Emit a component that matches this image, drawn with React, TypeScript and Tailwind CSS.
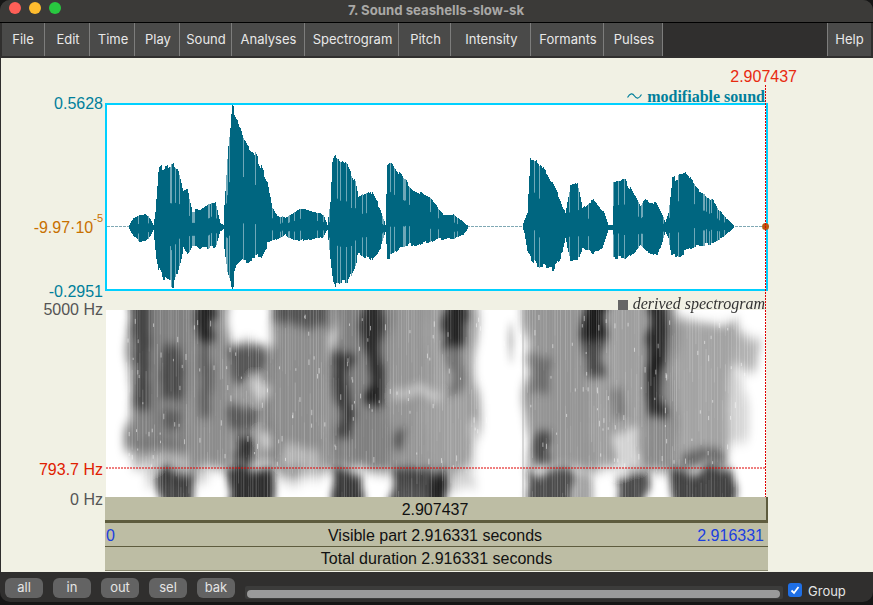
import { useMemo } from 'react';

const sans = { fontFamily: '"Liberation Sans", Arial, sans-serif' };

const menus = [
  { label: 'File', w: 'w-[43px]' },
  { label: 'Edit', w: 'w-[45px] pl-[2px]' },
  { label: 'Time', w: 'w-[45px] pl-[2px]' },
  { label: 'Play', w: 'w-[45px] pl-[2px]' },
  { label: 'Sound', w: 'w-[52px] pl-[1px]' },
  { label: 'Analyses', w: 'w-[73px] pl-[1px]' },
  { label: 'Spectrogram', w: 'w-[94px] pl-[2px]' },
  { label: 'Pitch', w: 'w-[52px] pl-[2px]' },
  { label: 'Intensity', w: 'w-[80px] pl-[2px]' },
  { label: 'Formants', w: 'w-[73px] pl-[2px]' },
  { label: 'Pulses', w: 'w-[59px] pl-[2px]' },
];

// outline of the wave: x, top, bottom in page pixels
const envelope: number[][] = [
  [106, 226.5, 227.5], [128, 226.5, 227.5], [133, 217, 237], [140, 213, 243], [148, 215, 240], [153, 225, 230],
  [155, 210, 253], [158, 165, 270], [163, 162, 282], [173, 157, 290], [178, 165, 273], [183, 190, 250],
  [187, 188, 258], [192, 210, 247], [200, 207, 250], [215, 200, 248], [220, 223, 232], [223, 225, 229],
  [224, 205, 250], [227, 152, 273], [232, 104, 290], [237, 115, 273], [243, 135, 265], [253, 147, 263],
  [260, 163, 260], [267, 178, 247], [272, 207, 243], [277, 215, 240], [285, 217, 235], [287, 215, 238],
  [300, 208, 242], [323, 213, 238], [327, 225, 230], [330, 200, 263], [332, 157, 283], [335, 152, 290],
  [347, 160, 288], [355, 178, 267], [358, 195, 257], [370, 188, 263], [380, 207, 250], [385, 225, 232],
  [387, 163, 260], [391, 160, 260], [400, 172, 250], [413, 188, 247], [430, 197, 243], [440, 210, 240],
  [443, 215, 240], [453, 213, 240], [463, 222, 235], [468, 226, 228], [470, 226.5, 227.5], [522, 226.5, 227.5],
  [524, 220, 233], [527, 212, 253], [530, 157, 260], [537, 155, 270], [553, 180, 272], [562, 203, 255],
  [565, 212, 240], [570, 185, 263], [577, 180, 265], [582, 207, 250], [593, 198, 255], [603, 210, 247],
  [608, 225, 230], [612, 225, 230], [613, 182, 260], [625, 178, 263], [640, 205, 247], [645, 197, 253],
  [657, 203, 258], [665, 222, 233], [668, 213, 240], [672, 177, 260], [685, 170, 255], [697, 187, 247],
  [713, 200, 245], [723, 215, 238], [733, 225, 228], [735, 226.5, 227.5], [766, 226.5, 227.5],
];

function lookup(x: number) {
  for (let i = 0; i < envelope.length - 1; i++) {
    const a = envelope[i];
    const b = envelope[i + 1];
    if (x >= a[0] && x <= b[0]) {
      const t = (x - a[0]) / (b[0] - a[0] || 1);
      return [a[1] + (b[1] - a[1]) * t, a[2] + (b[2] - a[2]) * t];
    }
  }
  return [226.5, 227.5];
}

function seeded(seed: number) {
  let s = seed;
  return () => {
    s = (s * 16807) % 2147483647;
    return s / 2147483647;
  };
}

function Waveform() {
  const bars = useMemo(() => {
    const rnd = seeded(41);
    const out: { x: number; t: number; b: number; light: boolean }[] = [];
    let jt = 0;
    let jb = 0;
    for (let x = 107; x < 766; x++) {
      const [t, b] = lookup(x);
      const size = b - t;
      if (size <= 2) continue;
      if (x % 3 === 0) {
        jt = rnd();
        jb = rnd();
      }
      const jitter = size * 0.07;
      const isPeak = x >= 231 && x <= 233;
      out.push({
        x,
        t: Math.round(isPeak ? t : t + jt * jitter),
        b: Math.round(isPeak ? b : b - jb * jitter),
        light: size > 20 && rnd() < 0.12,
      });
    }
    return out;
  }, []);

  return (
    <svg width="659" height="184" viewBox="107 105 659 184" className="block">
      <path d="M107 226.5H766" stroke="#7fa8b4" strokeWidth="1" strokeDasharray="3 1" />
      {bars.map((b) => (
        <g key={b.x}>
          <path d={`M${b.x + 0.5} ${b.t}V${b.b}`} stroke="#006680" strokeWidth="1" />
          {b.light && (
            <path d={`M${b.x + 0.5} ${b.t}V${b.t + (b.b - b.t) * 0.32}M${b.x + 0.5} ${b.b - (b.b - b.t) * 0.3}V${b.b}`} stroke="#6fa8b8" strokeWidth="1" />
          )}
        </g>
      ))}
    </svg>
  );
}

// broad gray of the voiced stretches: x, y, w, h, darkness
const washes: number[][] = [
  [127, 280, 60, 170, 0.5], [134, 445, 50, 26, 0.32], [146, 468, 60, 18, 0.18],
  [187, 280, 42, 190, 0.45], [229, 345, 44, 120, 0.4], [270, 280, 62, 195, 0.45],
  [272, 472, 50, 12, 0.16], [333, 280, 55, 192, 0.5], [388, 280, 40, 190, 0.42], [428, 280, 48, 192, 0.38],
  [394, 470, 80, 20, 0.18], [526, 280, 64, 192, 0.42], [590, 280, 55, 192, 0.38], [645, 280, 30, 192, 0.46],
  [675, 322, 58, 150, 0.36], [733, 338, 24, 26, 0.3], [733, 370, 14, 70, 0.16],
];

const marks: number[][] = [
  [133, 280, 17, 130, 0.46], [165, 345, 14, 55, 0.42], [164, 414, 16, 16, 0.3],
  [197, 280, 20, 62, 0.74], [199, 342, 14, 76, 0.32], [231, 348, 32, 34, 0.44], [231, 406, 28, 24, 0.42],
  [233, 436, 18, 30, 0.7], [272, 280, 56, 46, 0.4], [335, 352, 16, 86, 0.55], [365, 280, 18, 62, 0.66],
  [366, 342, 18, 66, 0.66], [364, 386, 10, 18, 0.46], [393, 430, 14, 20, 0.4],
  [446, 280, 20, 66, 0.78], [448, 346, 14, 50, 0.28], [527, 357, 24, 36, 0.28], [535, 432, 17, 28, 0.52],
  [584, 280, 20, 58, 0.84], [586, 338, 18, 38, 0.55], [611, 392, 13, 26, 0.24],
  [647, 280, 18, 138, 0.7], [651, 352, 9, 24, 0.35], [680, 449, 46, 15, 0.38],
  [160, 470, 34, 60, 0.72], [228, 468, 46, 62, 0.82], [332, 472, 32, 58, 0.78], [389, 468, 56, 62, 0.68],
  [527, 470, 44, 60, 0.7], [573, 473, 20, 57, 0.36], [615, 473, 31, 57, 0.7], [673, 470, 62, 60, 0.74],
  [431, 471, 14, 59, 0.55], [509, 322, 2, 36, 0.4],
];

// paler patches inside the gray
const gaps: number[][] = [
  [256, 382, 12, 16, 0.5], [258, 432, 12, 18, 0.5], [395, 386, 45, 11, 0.45], [616, 432, 24, 38, 0.55],
  [692, 290, 42, 30, 0.6], [140, 460, 18, 10, 0.4], [280, 448, 45, 18, 0.35], [470, 420, 12, 50, 0.4],
];

function Spectrogram() {
  const streaks = useMemo(() => {
    const rnd = seeded(977);
    const out: { x: number; y: number; h: number; o: number }[] = [];
    for (let x = 126; x < 760; x += 2 + rnd() * 1.4) {
      let y = 310;
      while (y < 497) {
        const h = 18 + rnd() * 70;
        out.push({ x, y, h, o: 0.03 + rnd() * 0.22 });
        y += h;
      }
    }
    return out;
  }, []);
  const specks = useMemo(() => {
    const rnd = seeded(313);
    return Array.from({ length: 200 }, () => ({
      x: 126 + rnd() * 630,
      y: 312 + rnd() * 155,
      h: 2 + rnd() * 4,
    }));
  }, []);

  // drawn 30px taller at both ends so the blur does not fade at the panel's edge
  return (
    <svg width="660" height="247" viewBox="106 280 660 247" className="mt-[-30px] block bg-white">
      <defs>
        <filter id="wash" x="-10%" y="-10%" width="120%" height="120%">
          <feTurbulence type="fractalNoise" baseFrequency="0.035 0.02" numOctaves="2" seed="7" result="noise" />
          <feDisplacementMap in="SourceGraphic" in2="noise" scale="22" xChannelSelector="R" yChannelSelector="G" />
          <feGaussianBlur stdDeviation="4 6" />
        </filter>
        <filter id="mark" x="-10%" y="-10%" width="120%" height="120%">
          <feTurbulence type="fractalNoise" baseFrequency="0.04 0.03" numOctaves="2" seed="3" result="noise" />
          <feDisplacementMap in="SourceGraphic" in2="noise" scale="20" xChannelSelector="R" yChannelSelector="G" />
          <feGaussianBlur stdDeviation="3.5 5" />
        </filter>
      </defs>
      <g filter="url(#wash)">
        {washes.map((b, i) => (
          <rect key={i} x={b[0]} y={b[1]} width={b[2]} height={b[3]} fill="#000" opacity={b[4]} />
        ))}
      </g>
      <g filter="url(#mark)">
        {marks.map((b, i) => (
          <rect key={i} x={b[0]} y={b[1]} width={b[2]} height={b[3]} fill="#000" opacity={b[4]} />
        ))}
        {gaps.map((b, i) => (
          <rect key={i} x={b[0]} y={b[1]} width={b[2]} height={b[3]} fill="#fff" opacity={b[4]} />
        ))}
      </g>
      {streaks.map((l, i) => (
        <rect key={i} x={l.x} y={l.y} width="1" height={l.h} fill="#fff" opacity={l.o} />
      ))}
      {specks.map((s, i) => (
        <rect key={i} x={s.x} y={s.y} width="1" height={s.h} fill="#fff" opacity="0.5" />
      ))}
      <rect x="522.5" y="310" width="1" height="187" fill="#b5b5b5" />
      <path d="M106 468H765" stroke="#e00000" strokeWidth="1" strokeDasharray="2 1" />
    </svg>
  );
}

function GrayButton({ label }: { label: string }) {
  return (
    <div className="flex h-[20px] w-[38px] items-center justify-center rounded-[6px] bg-[#636363] text-[13px] text-[#e4e4e4]" style={{ fontFamily: 'Inter, sans-serif' }}>
      {label}
    </div>
  );
}

export default function App() {
  return (
    <div className="h-[605px] w-[873px] overflow-hidden bg-[#161616]" style={sans}>
      <div className="flex h-[602px] w-[873px] flex-col overflow-hidden rounded-[10px] bg-[#302f2e]">
        {/* title bar */}
        <div className="relative flex h-[23px] items-center justify-center border-b border-black bg-[#3b3a38] pb-[1px]">
          <div className="absolute top-[2px] left-[9px] flex gap-[8px]">
            <div className="h-[12px] w-[12px] rounded-full bg-[#ff5f57]" />
            <div className="h-[12px] w-[12px] rounded-full bg-[#febc2e]" />
            <div className="h-[12px] w-[12px] rounded-full bg-[#28c840]" />
          </div>
          <span className="mr-[1px] text-[13.2px] font-bold text-[#a9a8a6]" style={{ fontFamily: 'Inter, sans-serif' }}>
            7. Sound seashells-slow-sk
          </span>
        </div>

        {/* menu bar */}
        <div className="flex h-[35px] items-start justify-between pr-[2px] pl-[2px]" style={{ fontFamily: 'Inter, sans-serif' }}>
          <div className="flex">
            {menus.map((m) => (
              <div key={m.label} className={`flex h-[33px] items-center justify-center border-r border-[#7d7d7c] bg-[#4a4a49] text-[13px] text-[#e8e8e8] ${m.w}`}>
                {m.label}
              </div>
            ))}
          </div>
          <div className="flex h-[33px] w-[44px] items-center justify-center border-l border-[#7d7d7c] bg-[#4a4a49] text-[13px] text-[#e8e8e8]">
            Help
          </div>
        </div>

        {/* sound area */}
        <div className="relative ml-[1px] flex h-[514px] bg-[#f1f1e4]">
          <div className="flex w-[104px] shrink-0 flex-col items-end pr-[2px] text-[16px] leading-[18px]">
            <span className="mt-[37px] text-[#007f9b]">0.5628</span>
            <span className="mt-[105px] text-[#c87000]">
              -9.97·10<sup className="align-super text-[11px] leading-none">-5</sup>
            </span>
            <span className="mt-[46px] text-[#007f9b]">-0.2951</span>
            <span className="mt-0 text-[#555]">5000 Hz</span>
            <span className="mt-[142px] text-[#e02000]">793.7 Hz</span>
            <span className="mt-[12px] text-[#555]">0 Hz</span>
          </div>

          <div className="flex w-[663px] shrink-0 flex-col">
            <div className="flex h-[27px] justify-end">
              <span className="mt-[10px] mr-[-29px] text-[16px] leading-[18px] text-[#e82a10]">2.907437</span>
            </div>
            <div className="flex h-[18px] items-end justify-end gap-[5px] pr-[3px] text-[#007f9b]" style={{ fontFamily: '"Liberation Serif", serif' }}>
              <svg width="15" height="8" viewBox="0 0 15 8" className="mb-[3px]">
                <path d="M0.5 5.5C3 1 5.5 1 7.5 4S12 7 14.5 2.5" fill="none" stroke="#007f9b" strokeWidth="1.2" />
              </svg>
              <span className="mb-[-2px] text-[16px] leading-none font-bold">modifiable sound</span>
            </div>

            <div className="h-[188px] border-2 border-[#00d0ff] bg-white">
              <Waveform />
            </div>

            <div className="relative z-10 flex h-[19px] items-end justify-end gap-[5px] pr-[3px] text-[#333]" style={{ fontFamily: '"Liberation Serif", serif' }}>
              <div className="mb-0 h-[10px] w-[10px] bg-[#666]" />
              <span className="mb-[-2px] text-[16px] leading-none italic">derived spectrogram</span>
            </div>

            <div className="ml-[1px] h-[187px] overflow-hidden">
              <Spectrogram />
            </div>

            <div className="flex h-[26px] items-center justify-center border-r-2 border-b-[3px] border-[#5e5c3e] bg-[#bdbda4] pt-[2px] pr-[1px] text-[16px] text-[#111]">
              2.907437
            </div>
            <div className="grid h-[24px] grid-cols-[1fr_auto_1fr] items-center border-b border-[#5e5c3e] bg-[#bdbda4] px-[1px] pt-[1px] text-[16px]">
              <span className="text-[#1b3fe0]">0</span>
              <span className="mr-[3px] text-[#111]">Visible part 2.916331 seconds</span>
              <span className="pr-[3px] text-right text-[#1b3fe0]">2.916331</span>
            </div>
            <div className="flex h-[24px] items-center justify-center border-b border-[#8a8970] bg-[#bdbda4] pt-[1px] text-[16px] text-[#111]">
              Total duration 2.916331 seconds
            </div>
          </div>

          {/* cursor line runs over both panels */}
          <div className="absolute top-[27px] bottom-[75px] left-[764px] z-20 w-px bg-[repeating-linear-gradient(#e00000_0_2px,transparent_2px_3px)]" />
          <div className="absolute top-[165px] left-[761px] h-[7px] w-[7px] rounded-full bg-[#b85a10]" />
        </div>

        {/* bottom bar */}
        <div className="flex flex-1 items-start pl-[5px]" style={{ fontFamily: 'Inter, sans-serif' }}>
          <div className="mt-[6px] flex gap-[10px]">
            {['all', 'in', 'out', 'sel', 'bak'].map((b) => (
              <GrayButton key={b} label={b} />
            ))}
          </div>
          <div className="mt-[14px] ml-[10px] h-[13px] w-[538px] rounded-[2px] bg-[#3c3c3b] px-[2px] pt-[4px]">
            <div className="h-[8px] w-[533px] rounded-full bg-[#9a9a9a]" />
          </div>
          <div className="mt-[11px] ml-[5px] flex h-[14px] w-[14px] items-center justify-center rounded-[3px] bg-[#1f6fe5]">
            <svg width="10" height="10" viewBox="0 0 10 10">
              <path d="M1.5 5.5L4 8L8.5 2" fill="none" stroke="#fff" strokeWidth="1.8" />
            </svg>
          </div>
          <span className="mt-[10px] ml-[6px] text-[13px] text-[#e4e4e4]">Group</span>
        </div>
      </div>
    </div>
  );
}
